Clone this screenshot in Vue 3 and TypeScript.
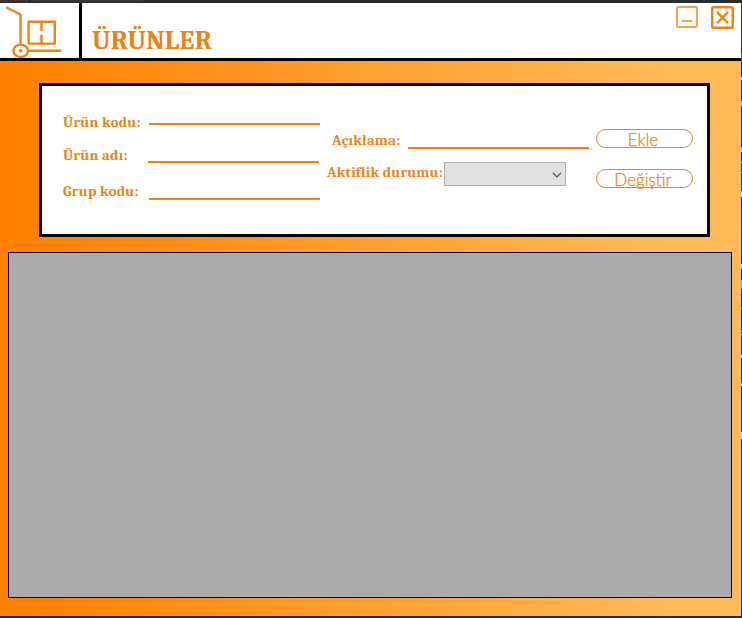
<script setup lang="ts">
import { ref } from 'vue'

const code = ref('')
const name = ref('')
const group = ref('')
const description = ref('')
const status = ref('')
</script>

<template>
  <div class="window">
    <div class="strip top"><i class="tab first"></i><i class="tab second"></i></div>
    <div class="body">
      <div class="main">
        <header class="header">
          <div class="logo">
            <svg width="79" height="55" viewBox="0 3 79 55" fill="none" stroke="#eb8413" stroke-width="2.4" stroke-linecap="round" stroke-linejoin="round">
              <path d="M7 7.8 20.5 14.5V44.5M28.5 50.7H60.3" />
              <path d="M28.6 21.8H54.8V43.6H28.6ZM41.5 22V30M41.5 35.5V43.5" />
              <ellipse cx="20.7" cy="50.8" rx="7.3" ry="6.2" />
              <circle cx="20.5" cy="50.8" r="1.8" fill="#eb8413" stroke="none" />
            </svg>
          </div>
          <h1 class="title">ÜRÜNLER</h1>
          <div class="controls">
            <svg width="22" height="22" viewBox="0 0 22 22" fill="none" stroke="#f3a24d" stroke-width="2" stroke-linecap="round">
              <rect x="1" y="1" width="20" height="20" rx="1.5" /><path d="M6.5 15H15.5" />
            </svg>
            <svg width="23" height="23" viewBox="0 0 23 23" fill="none" stroke="#eb8413" stroke-width="2.4" stroke-linecap="round">
              <rect x="1.2" y="1.2" width="20.6" height="20.6" rx="1.5" /><path d="m6.5 6.5 10 10m0-10-10 10" />
            </svg>
          </div>
        </header>
        <main class="content">
          <section class="panel">
            <div class="fields">
              <label class="row r1"><span class="label w78">Ürün kodu:</span><input v-model="code" class="line" /></label>
              <label class="row r2"><span class="label w64">Ürün adı:</span><input v-model="name" class="line" /></label>
              <label class="row r3"><span class="label w78">Grup kodu:</span><input v-model="group" class="line" /></label>
            </div>
            <div class="details">
              <label class="row desc"><span class="label w69">Açıklama:</span><input v-model="description" class="line" /></label>
              <label class="row state">
                <span class="label w116">Aktiflik durumu:</span>
                <span class="combo">
                  <select v-model="status"></select>
                  <svg width="10" height="6" viewBox="0 0 10 6" fill="none" stroke="#444" stroke-width="1.2"><path d="m1 .8 4 4 4-4" /></svg>
                </span>
              </label>
            </div>
            <div class="actions">
              <button type="button"><span>Ekle</span></button>
              <button type="button"><span>Değiştir</span></button>
            </div>
          </section>
          <div class="grid"></div>
        </main>
      </div>
      <div class="edge"></div>
    </div>
    <div class="strip bottom"></div>
  </div>
</template>

<style>
body { margin: 0; overflow: hidden; }
</style>

<style scoped>
* { box-sizing: border-box; }
.window { width: 742px; height: 618px; display: flex; flex-direction: column; background: #2b2b2d; }
.strip { flex: none; display: flex; background: #2b2b2d; }
.top { height: 3px; }
.tab { height: 2px; background: #343437; border-right: 1px solid #49494c; }
.first { width: 27px; }
.second { width: 110px; margin-left: 6px; border-left: 1px solid #49494c; }
.bottom { height: 2px; }
.body { display: flex; height: 613px; }
.main { width: 741px; display: flex; flex-direction: column; }
.edge {
  width: 1px;
  background: linear-gradient(#2b2b2d 50px, #779 50px 58px, #2a1c0c 58px 74px, #fff0d0 74px 77px, #2a1c0c 77px 98px, #9bc 98px 103px, #2a1c0c 103px 144px, #fc9 144px 149px, #2a1c0c 149px 159px, #fff 159px 160px, #2a1c0c 160px 169px, #fff 169px 170px, #2a1c0c 170px 188px, #fff0d0 188px 194px, #2a1c0c 194px 261px, #dedbb0 261px 266px, #2a1c0c 266px 277px, #70acc8 277px 286px, #2a1c0c 286px 305px, #fc9 305px 306px, #2a1c0c 306px 328px, #edc 328px 329px, #2a1c0c 329px 331px, #edc 331px 332px, #2a1c0c 332px 352px, #edc 352px 355px, #2a1c0c 355px 380px, #fd9 380px 383px, #2a1c0c 383px 429px, #fff0d0 429px 436px, #2a1c0c 436px);
}
.header { height: 58px; flex: none; display: flex; background: #fff; border-bottom: 3px solid #000; }
.logo { width: 82px; border-right: 3px solid #000; }
.logo svg { display: block; }
.title {
  margin: 0; padding: 21px 0 0 10px; flex: 1;
  font: bold 26.67px/34px Cambria, Caladea, "Noto Serif", "Droid Serif", "DejaVu Serif Condensed", "DejaVu Serif", serif;
  letter-spacing: .3px;
  color: #eb8413;
}
.controls { display: flex; gap: 13px; padding: 3px 7px 0 0; }
.content {
  height: 555px; padding: 22px 9px 18px 8px;
  background: linear-gradient(90deg, #ff8000 8px, #ffb957 660px);
}
.panel { width: 671px; height: 154px; margin-left: 31px; border: 3px solid #000; background: #fff; display: flex; }
.grid { width: 724px; height: 346px; margin-top: 15px; border: 1px solid #000; background: #ababab; }
.fields { width: 285px; padding: 24px 0 0 21px; }
.row { display: flex; align-items: flex-start; }
.label {
  flex: none; white-space: nowrap; padding-top: 1px;
  font: bold 14.67px/24px Cambria, Caladea, "Noto Serif", "Droid Serif", "DejaVu Serif Condensed", "DejaVu Serif", serif;
  letter-spacing: .25px;
  color: #eb8413;
}
.w78 { width: 86px; }
.w64 { width: 85px; }
.w69 { width: 76px; }
.w116 { width: 117px; letter-spacing: .2px; }
.line { width: 171px; height: 15px; padding: 0; border: 0; border-bottom: 2px solid #eb8413; background: transparent; outline: 0; }
.r1 { height: 33px; }
.r2 { height: 36px; }
.r2 .line { height: 20px; }
.r3 .line { height: 21px; }
.details { width: 262px; padding-top: 42px; }
.desc { height: 34px; padding-left: 5px; }
.desc .line { width: 181px; height: 21px; }
.state .label { margin-top: -2px; }
.combo { width: 122px; height: 24px; display: flex; align-items: center; background: #e1e1e1; border: 1px solid #adadad; padding-right: 3px; }
.combo svg { margin-top: 2px; }
.combo select { flex: 1; min-width: 0; height: 22px; appearance: none; border: 0; background: transparent; }
.actions { padding: 43px 0 0 7px; display: flex; flex-direction: column; gap: 21px; }
.actions button {
  width: 97px; height: 19px; padding: 0; border: 1px solid #eb8413; border-radius: 10px; background: #fff;
  display: flex; justify-content: center; align-items: center;
  font: 300 17px/20px "Century Gothic", "URW Gothic", Lato, sans-serif; color: #eb8413;
  -webkit-text-stroke: .25px #eb8413;
}
.actions span { display: block; margin: 2px 3px 0 0; }
</style>
